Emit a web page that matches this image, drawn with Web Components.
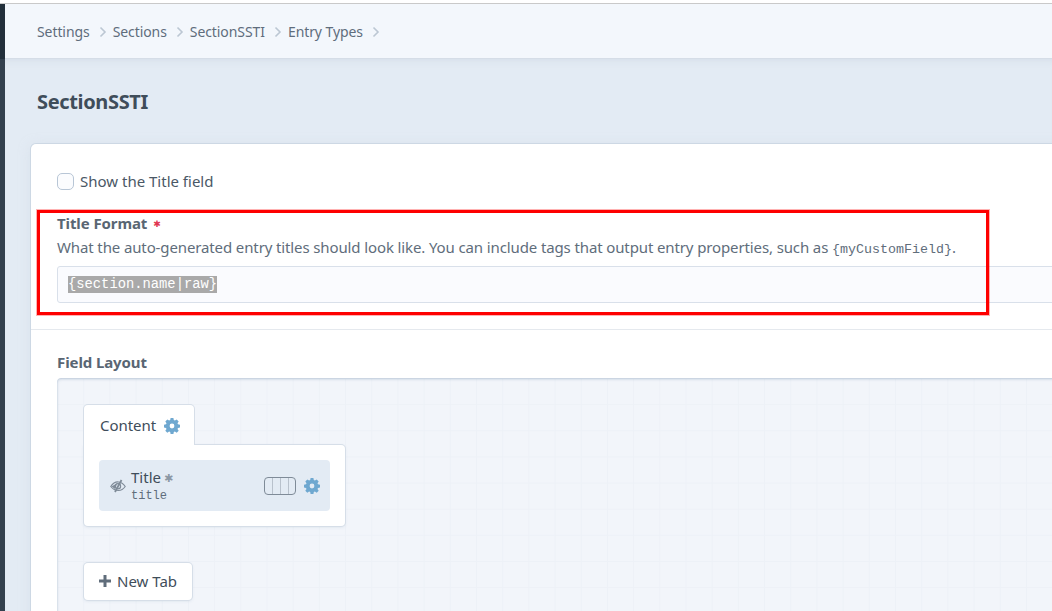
<!DOCTYPE html>
<html>
<head>
<meta charset="utf-8">
<style>
  html, body { margin: 0; height: 100%; overflow: hidden; background: #fff; }
  body { font-family: "Noto Sans", sans-serif; font-size: 15px; color: #3f4d5a; }
</style>
</head>
<body>
<cp-shell>
  <cp-breadcrumbs slot="crumbs">
    <cp-crumb>Settings</cp-crumb>
    <cp-crumb>Sections</cp-crumb>
    <cp-crumb>SectionSSTI</cp-crumb>
    <cp-crumb>Entry Types</cp-crumb>
  </cp-breadcrumbs>
  <cp-page-title slot="title">SectionSSTI</cp-page-title>
  <cp-card>
    <cp-title-settings></cp-title-settings>
    <cp-field-layout></cp-field-layout>
  </cp-card>
</cp-shell>
<red-box></red-box>

<script>
"use strict";
(() => {
  const gear = `<svg viewBox="0 0 16 16" width="16" height="16"><path fill="#6fa8d0" fill-rule="evenodd" d="M6.6 0h2.8l.4 2.1 1.1.5 1.8-1.200 2 2-1.200 1.800.5 1.100 2 .4v2.800l-2 .4-.5 1.100 1.200 1.800-2 2-1.800-1.200-1.100.5-.4 2H6.600l-.4-2-1.100-.5-1.800 1.200-2-2 1.200-1.800-.5-1.100-2-.4V6.700l2-.4.5-1.100L1.300 3.400l2-2 1.800 1.200 1.100-.5zM8 5.600a2.400 2.400 0 1 0 0 4.800 2.400 2.400 0 0 0 0-4.800z"/></svg>`;

  customElements.define("cp-shell", class extends HTMLElement {
    constructor() {
      super();
      this.attachShadow({mode: "open"}).innerHTML = `
        <style>
          :host {
            display: grid;
            grid-template-columns: 5px 1047px;
            grid-template-rows: 59px 552px;
            width: 1052px;
            height: 611px;
            overflow: hidden;
            background: linear-gradient(#fff 3px, #c9c9c9 3px, #c9c9c9 4px, transparent 4px);
          }
          #nav-top { background: #222f3b; margin-top: 4px; }
          #nav { background: #33404e; }
          #top { padding-top: 4px; }
          #main {
            background: #e3ebf4;
            padding: 0 0 0 26px;
            overflow: hidden;
            box-shadow: inset 0 8px 8px -8px rgba(155,170,190,.25);
          }
        </style>
        <div id="nav-top"></div>
        <div id="top"><slot name="crumbs"></slot></div>
        <div id="nav"></div>
        <div id="main">
          <slot name="title"></slot>
          <slot></slot>
        </div>
      `;
    }
  });

  customElements.define("cp-breadcrumbs", class extends HTMLElement {
    constructor() {
      super();
      this.attachShadow({mode: "open"}).innerHTML = `
        <style>
          :host {
            display: flex;
            align-items: center;
            box-sizing: border-box;
            height: 55px;
            padding-left: 32px;
            background: #f3f7fc;
            border-bottom: 1px solid #d5dde7;
          }
        </style>
        <slot></slot>
      `;
    }
  });

  customElements.define("cp-crumb", class extends HTMLElement {
    constructor() {
      super();
      this.attachShadow({mode: "open"}).innerHTML = `
        <style>
          :host {
            display: inline-flex;
            align-items: center;
            color: #5f6d7c;
            font-size: 14px;
            letter-spacing: -0.08px;
          }
          svg { margin: 1px 6px 0 9px; }
        </style>
        <slot></slot>
        <svg width="8" height="12" viewBox="0 0 8 12"><path d="M1.500 1.500 6 6l-4.500 4.500" fill="none" stroke="#bcc7d3" stroke-width="1.600"/></svg>
      `;
    }
  });

  customElements.define("cp-page-title", class extends HTMLElement {
    constructor() {
      super();
      this.attachShadow({mode: "open"}).innerHTML = `
        <style>
          :host {
            display: flex;
            align-items: center;
            height: 85px;
            padding-left: 6px;
            color: #3f4d5a;
            font-size: 20px;
            font-weight: 700;
            letter-spacing: -0.35px;
          }
        </style>
        <slot></slot>
      `;
    }
  });

  customElements.define("cp-card", class extends HTMLElement {
    constructor() {
      super();
      this.attachShadow({mode: "open"}).innerHTML = `
        <style>
          :host {
            display: block;
            width: 1100px;
            height: 500px;
            background: #fff;
            border-radius: 5px;
            box-shadow: 0 0 0 1px #cdd8e4, 0 2px 12px rgba(205,216,228,.5);
          }
        </style>
        <slot></slot>
      `;
    }
  });

  customElements.define("cp-title-settings", class extends HTMLElement {
    constructor() {
      super();
      this.attachShadow({mode: "open"}).innerHTML = `
        <style>
          :host {
            display: block;
            box-sizing: border-box;
            height: 186px;
            padding: 28px 0 0 26px;
            border-bottom: 1px solid #e5e9ee;
          }
          #check { display: flex; align-items: center; gap: 6px; height: 18px; color: #4a5866; }
          #box {
            box-sizing: border-box;
            width: 17px;
            height: 17px;
            background: #fbfcfe;
            border: 1px solid #b8c6d6;
            border-radius: 5px;
          }
          #label {
            display: flex;
            align-items: center;
            margin-top: 24px;
            height: 18px;
            line-height: 18px;
            font-weight: 700;
            color: #596673;
            letter-spacing: -0.1px;
          }
          #label b {
            color: #e0354f;
            margin: 2px 0 0 6px;
            font: 9px "DejaVu Sans", sans-serif;
          }
          #hint {
            margin-top: 5px;
            height: 20px;
            line-height: 20px;
            color: #606d7b;
            white-space: nowrap;
            letter-spacing: -0.12px;
          }
          code { font-family: "Liberation Mono", monospace; font-size: 13.33px; letter-spacing: 0; }
          #input {
            box-sizing: border-box;
            display: flex;
            align-items: center;
            height: 37px;
            margin-top: 9px;
            padding-left: 10px;
            background: #fafbfe;
            border: 1px solid #d9e0ea;
            border-radius: 3px;
            font-family: "Liberation Mono", monospace;
            font-size: 13.8px;
            color: #fff;
          }
          #input span { background: #a9a9a9; line-height: 17px; }
        </style>
        <div id="check"><span id="box"></span><span>Show the Title field</span></div>
        <div id="label">Title Format<b>✱</b></div>
        <div id="hint">What the auto-generated entry titles should look like. You can include tags that output entry properties, such as <code>{myCustomField}</code>.</div>
        <div id="input"><span>{section.name|raw}</span></div>
      `;
    }
  });

  customElements.define("cp-field-layout", class extends HTMLElement {
    constructor() {
      super();
      this.attachShadow({mode: "open"}).innerHTML = `
        <style>
          :host { display: block; padding: 23px 0 0 26px; }
          h3 {
            margin: 0;
            height: 18px;
            line-height: 18px;
            font-size: 15px;
            color: #596673;
            letter-spacing: -0.1px;
          }
          #grid {
            box-sizing: border-box;
            height: 300px;
            margin-top: 7px;
            padding: 27px 0 0 27px;
            border-radius: 4px 0 0 0;
            background-color: #f2f5fa;
            background-image:
              linear-gradient(to right, #edf1f7 1px, transparent 1px),
              linear-gradient(to bottom, #edf1f7 1px, transparent 1px);
            background-size: 26.2px 26.15px;
            box-shadow: inset 0 1px 3px rgba(150,170,195,.6);
          }
          #tab {
            box-sizing: border-box;
            position: relative;
            z-index: 1;
            display: flex;
            align-items: center;
            gap: 8px;
            width: 110px;
            height: 40px;
            padding: 0 0 0 16px;
            background: #fff;
            border-radius: 4px 4px 0 0;
            box-shadow: 0 0 0 1px #d6dee8;
            clip-path: inset(-2px -2px 0 -2px);
            color: #3f4d5a;
            letter-spacing: -0.05px;
          }
          #tab svg { margin-top: 2px; }
          #tab-body {
            box-sizing: border-box;
            width: 261px;
            height: 81px;
            padding: 15px;
            background: #fff;
            border-radius: 0 4px 4px 4px;
            box-shadow: 0 0 0 1px #d6dee8, 0 1px 3px rgba(150,170,195,.3);
          }
          #field {
            display: flex;
            align-items: center;
            height: 51px;
            padding-left: 11px;
            background: #e3ebf4;
            border-radius: 4px;
          }
          #names { margin-left: 5px; flex: 1; padding-top: 3px; }
          #name { display: flex; align-items: center; height: 17px; line-height: 17px; color: #3f4d5a; }
          #name i {
            font: 11px "DejaVu Sans", sans-serif;
            color: #8c98a5;
            margin: 2px 0 0 3px;
          }
          #handle {
            font-family: "Liberation Mono", monospace;
            font-size: 12px;
            color: #606d7b;
            line-height: 17px;
            margin-top: 2px;
          }
          #width {
            box-sizing: border-box;
            width: 32px;
            height: 18px;
            margin-right: 8px;
            border: 1px solid #7f8b98;
            border-radius: 4px;
            background: repeating-linear-gradient(to right, transparent 0 7px, #b8c1cc 7px 8px);
          }
          #field-gear { margin-right: 10px; height: 16px; }
          #new-tab {
            box-sizing: border-box;
            display: flex;
            align-items: center;
            gap: 6px;
            width: 108px;
            height: 37px;
            margin-top: 37px;
            padding: 0 0 2px 15px;
            background: #fff;
            border-radius: 4px;
            box-shadow: 0 0 0 1px #d6dee8, 0 1px 3px rgba(150,170,195,.3);
            color: #3f4d5a;
          }
        </style>
        <h3>Field Layout</h3>
        <div id="grid">
          <div id="tab"><span>Content</span>${gear}</div>
          <div id="tab-body">
            <div id="field">
              <svg width="16" height="14" viewBox="0 0 16 14"><g fill="none" stroke="#7f8b98" stroke-width="1.200"><path d="M.8 7.500C3 4 6 2.800 8.500 3c2.800.2 5 2 6.700 4.500-1.900 2.700-4.300 4-6.700 4-3 0-5.800-1.500-7.700-4z"/><circle cx="8" cy="7.300" r="2.600"/></g><path d="M11.500 1 5 13" stroke="#7f8b98" stroke-width="1.800"/><path d="M1.500 7.500 7 4.300 5 10z" fill="#7f8b98"/></svg>
              <div id="names">
                <div id="name">Title<i>✱</i></div>
                <div id="handle">title</div>
              </div>
              <div id="width"></div>
              <div id="field-gear">${gear}</div>
            </div>
          </div>
          <div id="new-tab">
            <svg width="12" height="12" viewBox="0 0 12 12"><path d="M4.500 0h3v4.500H12v3H7.500V12h-3V7.500H0v-3h4.500z" fill="#606d7b"/></svg>
            <span>New Tab</span>
          </div>
        </div>
      `;
    }
  });

  // the annotation drawn over the screenshot
  customElements.define("red-box", class extends HTMLElement {
    constructor() {
      super();
      this.attachShadow({mode: "open"}).innerHTML = `
        <style>
          :host {
            position: absolute;
            left: 37px;
            top: 210px;
            width: 952px;
            height: 105px;
            box-sizing: border-box;
            border: 3px solid #fe0000;
            box-shadow: 0 0 0 1px rgba(255,0,0,.3);
            pointer-events: none;
          }
        </style>
      `;
    }
  });
})();
</script>
</body>
</html>
